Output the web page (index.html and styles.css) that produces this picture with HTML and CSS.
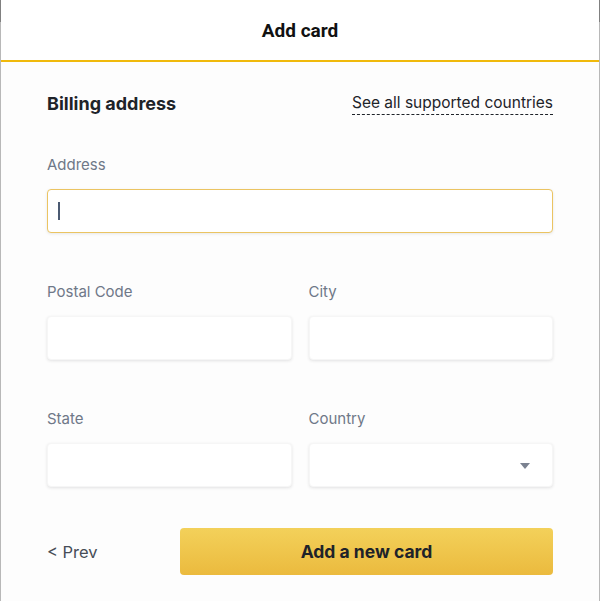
FILE: index.html
```html
<!DOCTYPE html>
<html>
<head>
<meta charset="utf-8">
<link rel="stylesheet" href="styles.css">
</head>
<body>
<div class="modal">
  <header class="header"><h1 class="title">Add card</h1></header>
  <main class="content">
    <div class="section-head">
      <h2 class="section-title">Billing address</h2>
      <a class="link">See all supported countries</a>
    </div>
    <div class="field">
      <label class="label">Address</label>
      <div class="input focused"><span class="caret"></span></div>
    </div>
    <div class="row">
      <div class="field">
        <label class="label">Postal Code</label>
        <div class="input"></div>
      </div>
      <div class="field">
        <label class="label">City</label>
        <div class="input"></div>
      </div>
    </div>
    <div class="row">
      <div class="field">
        <label class="label">State</label>
        <div class="input"></div>
      </div>
      <div class="field">
        <label class="label">Country</label>
        <div class="input select">
          <svg class="arrow" width="10" height="7" viewBox="0 0 10 7"><path d="M0 0H10L5 6Z" fill="#7b8290"/></svg>
        </div>
      </div>
    </div>
    <div class="actions">
      <span class="prev">&lt; Prev</span>
      <button class="btn">Add a new card</button>
    </div>
  </main>
</div>
</body>
</html>
```

FILE: styles.css
```css
* { box-sizing: border-box; }
html, body { margin: 0; padding: 0; background: #fff; }
body { width: 600px; height: 601px; overflow: hidden; font-family: Inter, "Noto Sans", sans-serif; }
.modal {
  width: 600px;
  height: 601px;
  border-left: 1px solid #b8b8b8;
  border-right: 1px solid #b8b8b8;
  position: relative;
  background: #fdfdfd;
}
.modal::before, .modal::after {
  content: "";
  position: absolute;
  top: 0;
  width: 1px;
  height: 22px;
  background: #808080;
}
.modal::before { left: -1px; }
.modal::after { right: -1px; }
.header {
  height: 62px;
  background: #fff;
  border-bottom: 2px solid #f0b90b;
  display: flex;
  align-items: center;
  justify-content: center;
}
.title {
  margin: 0;
  font-family: Roboto, sans-serif;
  font-weight: 700;
  font-size: 19px;
  color: #111;
}
.content { padding: 28px 46px 0 46px; }
.section-head {
  display: flex;
  justify-content: space-between;
  align-items: center;
  height: 26px;
}
.section-title { margin: 0; font-size: 18px; font-weight: 700; color: #1e2329; }
.link {
  font-size: 15.5px;
  color: #1e2329;
  border-bottom: 1px dashed #1e2329;
  line-height: 20px;
  padding-bottom: 1px;
  margin-top: 2px;
}
.field { display: flex; flex-direction: column; }
.label {
  font-size: 15px;
  color: #6f7888;
  line-height: 20px;
  margin-top: 39px;
  margin-bottom: 14px;
}
.row .label { margin-top: 31px; }
.input {
  height: 44px;
  background: #fff;
  border-radius: 4px;
  border: 1px solid #f6f6f6;
  box-shadow: 0 1px 3px rgba(30, 35, 41, 0.12);
  display: flex;
  align-items: center;
  padding: 0 10px;
}
.input.focused { border: 1px solid #ebc462; box-shadow: 0 1px 3px rgba(30,35,41,0.10); }
.caret { width: 2px; height: 18px; background: #4b5a72; }
.select { justify-content: flex-end; padding-right: 22px; }
.arrow { display: block; margin-top: 2px; }
.row {
  display: grid;
  grid-template-columns: 1fr 1fr;
  column-gap: 17px;
  margin-top: 18px;
}
.actions {
  display: flex;
  align-items: center;
  gap: 80px;
  margin-top: 41px;
}
.prev { font-size: 16.5px; color: #474d57; width: 53px; flex: none; white-space: nowrap; }
.btn {
  flex: 1;
  height: 47px;
  border: none;
  border-radius: 4px;
  background: linear-gradient(180deg, #f3d15a 0%, #ebba3e 100%);
  font-family: Inter, "Noto Sans", sans-serif;
  font-weight: 700;
  font-size: 17.5px;
  color: #1e2329;
}
```
